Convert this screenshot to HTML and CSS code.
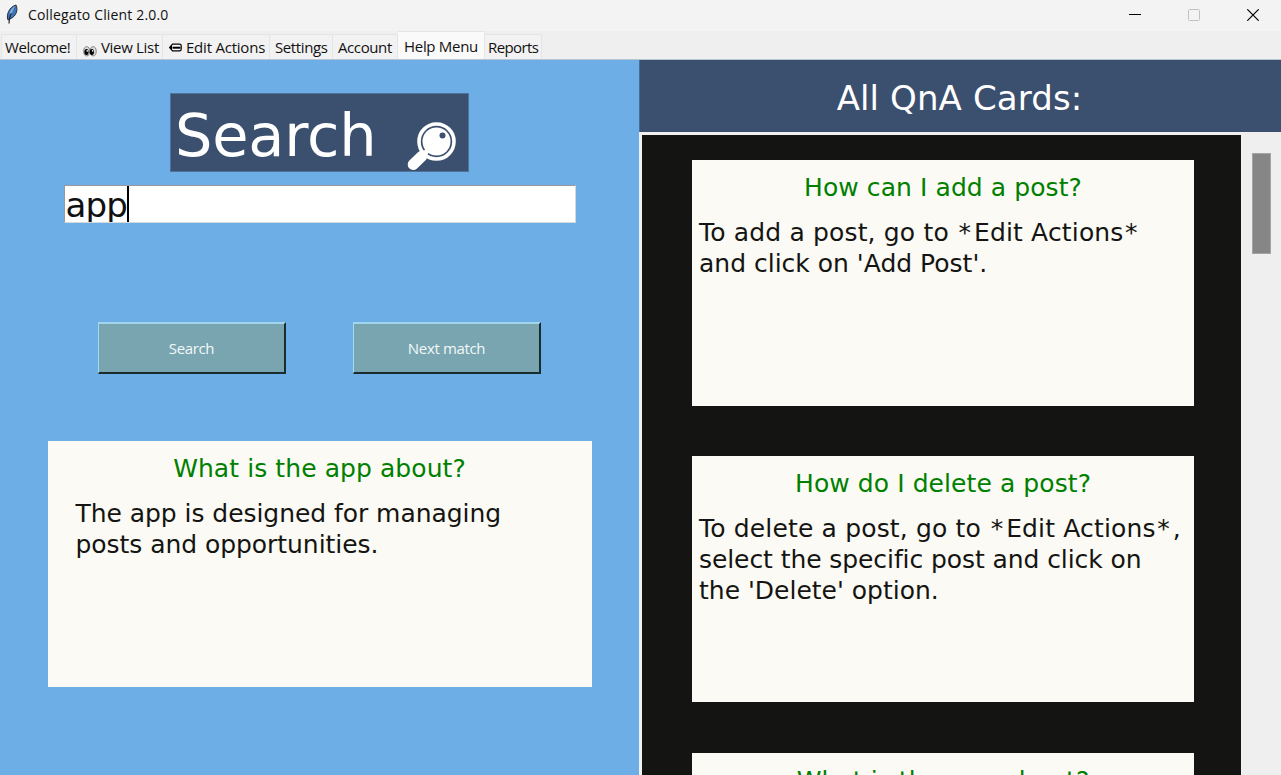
FILE: index.html
```html
<!DOCTYPE html>
<html lang="en">
<head>
<meta charset="utf-8">
<title>Collegato Client 2.0.0</title>
<link rel="stylesheet" href="styles.css">
</head>
<body>
<div class="window">
  <header class="titlebar">
    <svg class="feather" width="14" height="20" viewBox="0 0 14 20"><path d="M3 16C1 11 4 3 11 1c2 4 1 11-6 14z" fill="#3d76b8" stroke="#252b35" stroke-width="1"/><path d="M4 19.5C4 13 6 8 10 3" fill="none" stroke="#202630" stroke-width="1.2"/><path d="M4.5 10C5 6 8 3 10.500 2L7 9z" fill="#79aee0"/></svg>
    <span class="app-name">Collegato Client 2.0.0</span>
    <div class="controls">
      <svg width="12" height="12" viewBox="0 0 12 12"><path d="M0 5.5h12" stroke="#000"/></svg>
      <svg width="12" height="12" viewBox="0 0 12 12"><rect x=".5" y=".5" width="11" height="11" rx="1" fill="none" stroke="#c0c0c0"/></svg>
      <svg width="12" height="12" viewBox="0 0 12 12"><path d="M.3.3l11.4 11.4M11.7.3L.3 11.7" stroke="#000" stroke-width="1.2"/></svg>
    </div>
  </header>
  <nav class="tabs">
    <div class="tab welcome">Welcome!</div>
    <div class="tab view"><svg class="eyes" width="14" height="11" viewBox="0 0 14 11"><ellipse cx="3.7" cy="5.3" rx="3" ry="4.6" fill="#ddd" stroke="#777" stroke-width=".9"/><ellipse cx="10.2" cy="5.3" rx="3" ry="4.600" fill="#ddd" stroke="#777" stroke-width=".9"/><ellipse cx="3.5" cy="6" rx="2.100" ry="3"/><ellipse cx="8.900" cy="6" rx="2.100" ry="3"/><circle cx="4.200" cy="4.900" r=".8" fill="#fff"/><circle cx="9.600" cy="4.900" r=".8" fill="#fff"/></svg><span>View List</span></div>
    <div class="tab edit"><svg width="13" height="9" viewBox="0 0 13 9"><path d="M.7 4.5L3.500 1.200h7q1.700 0 1.700 1.600v3.400q0 1.600-1.700 1.600h-7z" fill="#fff" stroke="#000" stroke-width="1.200" stroke-linejoin="round"/><path d="M3.500 4.700h8" stroke="#000" stroke-width="2"/><path d="M.5 4.500l2.500-2v4z"/></svg><span>Edit Actions</span></div>
    <div class="tab settings">Settings</div>
    <div class="tab account">Account</div>
    <div class="tab help selected">Help Menu</div>
    <div class="tab reports">Reports</div>
  </nav>
  <main class="content">
    <section class="search-pane">
      <h1 class="search-title"><span>Search</span><svg width="50" height="50" viewBox="0 0 50 50"><path d="M6.2 43.5L15 35" stroke="#fff" stroke-width="11" stroke-linecap="round"/><path d="M14 36l7-7" stroke="#fff" stroke-width="5"/><circle cx="29.5" cy="20.5" r="17.5" fill="none" stroke="#fff" stroke-width="3.6"/><circle cx="29.5" cy="20.5" r="14" fill="#fff"/><circle cx="35.5" cy="14.5" r="3" fill="#3b4f6f"/></svg></h1>
      <div class="entry"><span>app</span><i class="caret"></i></div>
      <div class="buttons"><div class="button">Search</div><div class="button">Next match</div></div>
      <article class="card result"><h2>What is the app about?</h2><p>The app is designed for managing<br>posts and opportunities.</p></article>
    </section>
    <section class="cards-pane">
      <h1 class="cards-title">All QnA Cards:</h1>
      <div class="scroll-area">
        <div class="canvas">
          <article class="card"><h2>How can I add a post?</h2><p><span class="wide">To add a post, go to <b>*</b>Edit Actions<b>*</b></span><br>and click on 'Add Post'.</p></article>
          <article class="card"><h2>How do I delete a post?</h2><p><span class="wide">To delete a post, go to <b>*</b>Edit Actions<b>*</b>,</span><br><span class="narrow">select the specific post and click on</span><br>the 'Delete' option.</p></article>
          <article class="card"><h2>What is the app about?</h2></article>
        </div>
        <div class="scrollbar"><div class="thumb"></div></div>
      </div>
    </section>
  </main>
</div>
</body>
</html>
```
FILE: styles.css
```css
* { box-sizing: border-box; }
body { margin: 0; overflow: hidden; font-family: "Open Sans", sans-serif; color: #111; }
h1, h2, p { margin: 0; font-weight: 400; }
svg { display: block; flex: none; }
.window { width: 1281px; height: 775px; overflow: hidden; background: #efefef; display: flex; flex-direction: column; }
.titlebar { height: 31px; flex: none; background: #f3f3f3; display: flex; align-items: center; padding: 0 22px 1px 5px; }
.feather { margin-top: -2px; }
.app-name { font-size: 14px; letter-spacing: .16px; margin-left: 9px; line-height: 20px; white-space: nowrap; }
.controls { margin-left: auto; display: flex; gap: 47px; }
.tabs { height: 28px; flex: none; display: flex; align-items: flex-end; padding-left: 1px; }
.tab { height: 25px; border: 1px solid #e5e5e5; border-left-width: 0; border-bottom: 0; background: #f2f2f2; font-size: 15px; letter-spacing: -.4px; line-height: 25px; padding-left: 4px; padding-top: 1px; white-space: nowrap; display: flex; align-items: center; }
.tab.welcome { width: 76px; border-left-width: 1px; padding-left: 3px; }
.tab.view { width: 86px; padding-left: 6px; gap: 4px; letter-spacing: -.32px; }
.eyes { margin-top: 7px; }
.tab.edit { width: 107px; padding-left: 6px; gap: 4px; letter-spacing: -.22px; }
.tab.settings { width: 63px; padding-left: 5px; }
.tab.account { width: 65px; padding-left: 5px; }
.tab.help { width: 87px; padding-left: 6px; letter-spacing: -.3px; }
.tab.reports { width: 57px; padding-left: 3px; letter-spacing: -.6px; }
.tab.selected { height: 28px; background: #fafafa; }
.content { height: 716px; flex: none; display: flex; border-top: 1px solid #b8c6d3; padding-right: 1px; }
.search-pane { width: 639px; flex: none; background: #6eaee6; display: flex; flex-direction: column; align-items: center; padding-top: 33px; font-family: "DejaVu Sans", sans-serif; }
.search-title { width: 299px; height: 79px; background: #3b4f6f; color: #fff; border: 1px solid #51729a; display: flex; align-items: flex-start; gap: 30px; padding-left: 4px; font-size: 59px; line-height: 84px; }
.search-title span { letter-spacing: -.2px; }
.search-title svg { margin-top: 27px; }
.entry { width: 512px; height: 38px; margin-top: 13px; background: #fff; border: 1px solid #d4d9dc; border-top-color: #999; border-left-color: #999; display: flex; padding-left: 1px; font-size: 34px; letter-spacing: -.8px; line-height: 38px; overflow: hidden; }
.caret { width: 2px; height: 36px; background: #000; }
.buttons { display: flex; gap: 67px; margin-top: 99px; }
.button { width: 188px; height: 52px; background: #78a5b0; border: 2px solid #192c30; border-top-color: #a1d5eb; border-left: 1px solid #a5dcec; color: #f3f8f8; text-align: center; font: 15px/48px "Open Sans", sans-serif; letter-spacing: -.35px; }
.card { width: 502px; height: 246px; flex: none; background: #fbfaf4; padding: 12px 7px; font-family: "DejaVu Sans", sans-serif; font-size: 25px; line-height: 31px; white-space: nowrap; font-variant-ligatures: none; }
.card h2 { color: #008000; font-size: 25px; line-height: 31px; text-align: center; letter-spacing: .08px; }
.card p { margin-top: 14px; color: #141412; }
.wide { letter-spacing: .16px; }
.wide b { font-weight: 400; letter-spacing: 3px; margin-left: 1.5px; }
.narrow { letter-spacing: -.08px; }
.result { width: 544px; margin-top: 67px; }
.result p { padding-left: 21px; letter-spacing: -.05px; }
.cards-pane { flex: 1; display: flex; flex-direction: column; }
.cards-title { height: 72px; flex: none; background: #3b4f6f; border-left: 1px solid #4a6d95; color: #fff; text-align: center; padding-right: 2px; font: 34px/76px "DejaVu Sans", sans-serif; letter-spacing: .12px; }
.scroll-area { flex: 1; display: flex; min-height: 0; }
.canvas { width: 603px; flex: none; overflow: hidden; background: #141412; border: 3px solid #f1f1f1; border-bottom: 0; border-right-width: 1px; padding: 25px 0 0 50px; display: flex; flex-direction: column; gap: 50.3px; }
.scrollbar { flex: 1; padding: 22px 10px 0; }
.thumb { width: 19px; height: 101px; margin-top: -1px; background: #868686; border: 1px solid #a4a4a4; }
```
